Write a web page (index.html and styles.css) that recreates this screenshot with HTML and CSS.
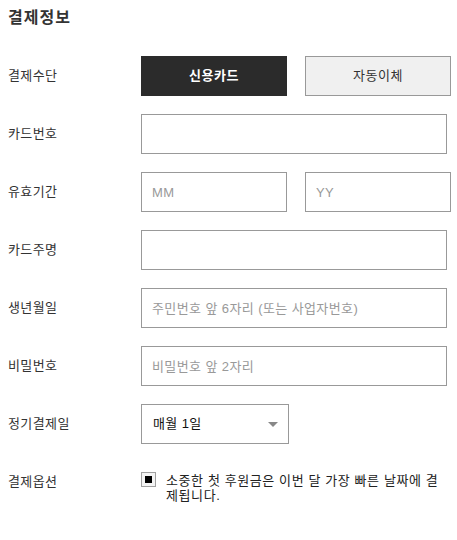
FILE: index.html
```html
<!DOCTYPE html>
<html lang="ko">
<head>
<meta charset="utf-8">
<title>결제정보</title>
<link rel="stylesheet" href="styles.css">
</head>
<body>
<div class="form">
  <h2 class="title">결제정보</h2>
  <div class="row">
    <div class="label">결제수단</div>
    <div class="pair">
      <button class="btn btn-active" type="button">신용카드</button>
      <button class="btn" type="button">자동이체</button>
    </div>
  </div>
  <div class="row">
    <div class="label">카드번호</div>
    <input class="field" type="text">
  </div>
  <div class="row">
    <div class="label">유효기간</div>
    <div class="pair">
      <input class="field field-half" type="text" placeholder="MM">
      <input class="field field-half" type="text" placeholder="YY">
    </div>
  </div>
  <div class="row">
    <div class="label">카드주명</div>
    <input class="field" type="text">
  </div>
  <div class="row">
    <div class="label">생년월일</div>
    <input class="field" type="text" placeholder="주민번호 앞 6자리 (또는 사업자번호)">
  </div>
  <div class="row">
    <div class="label">비밀번호</div>
    <input class="field" type="text" placeholder="비밀번호 앞 2자리">
  </div>
  <div class="row">
    <div class="label">정기결제일</div>
    <div class="select">
      <span class="select-text">매월 1일</span>
      <span class="select-arrow"></span>
    </div>
  </div>
  <div class="row row-option">
    <div class="label">결제옵션</div>
    <div class="option">
      <span class="check"><span class="check-mark"></span></span>
      <span class="option-text">소중한 첫 후원금은 이번 달 가장 빠른 날짜에 결제됩니다.</span>
    </div>
  </div>
</div>
</body>
</html>
```
FILE: styles.css
```css
* {
  box-sizing: border-box;
}

body {
  margin: 0;
  background: #fff;
  font-family: "Liberation Sans", "Noto Sans CJK KR", sans-serif;
  color: #333;
}

.form {
  padding: 8px;
}

.title {
  margin: 0 0 28px;
  font-size: 16px;
  line-height: 20px;
  font-weight: bold;
  letter-spacing: 1px;
  color: #333;
}

.row {
  display: grid;
  grid-template-columns: 133px auto;
  align-items: center;
  height: 40px;
  margin-bottom: 18px;
}

.label {
  font-size: 13px;
  line-height: 18px;
  letter-spacing: 0.4px;
  color: #333;
}

.pair {
  display: grid;
  grid-template-columns: 146px 146px;
  column-gap: 18px;
  height: 40px;
}

.btn {
  margin: 0;
  height: 40px;
  border: 1px solid #999;
  background: #f0f0f0;
  color: #333;
  font-family: inherit;
  font-size: 13px;
  line-height: 18px;
  letter-spacing: 0.5px;
  padding: 0;
}

.btn-active {
  background: #2b2b2b;
  border-color: #2b2b2b;
  color: #fff;
  font-weight: bold;
}

.field {
  margin: 0;
  width: 306px;
  height: 40px;
  border: 1px solid #999;
  padding: 0 10px;
  font-family: inherit;
  font-size: 13px;
  letter-spacing: 0.4px;
  color: #333;
  background: #fff;
  outline: none;
}

.field-half {
  width: 146px;
}

.field::placeholder {
  color: #999;
}

.select {
  width: 148px;
  height: 40px;
  border: 1px solid #999;
  display: flex;
  align-items: center;
  justify-content: space-between;
  padding: 0 10px 0 11px;
}

.select-text {
  font-size: 13px;
  line-height: 18px;
  letter-spacing: 0.4px;
  color: #111;
}

.select-arrow {
  width: 0;
  height: 0;
  border-left: 5px solid transparent;
  border-right: 5px solid transparent;
  border-top: 5px solid #888;
}

.row-option {
  height: auto;
  align-items: start;
  margin-top: 28px;
}

.row-option .label {
  line-height: 15px;
  padding-top: 2px;
}

.option {
  display: flex;
  align-items: flex-start;
  width: 306px;
}

.check {
  flex: none;
  width: 15px;
  height: 15px;
  border: 1px solid #a0a0a0;
  background: #f4f4f4;
  display: flex;
  align-items: center;
  justify-content: center;
  margin-right: 10px;
}

.check-mark {
  width: 7px;
  height: 7px;
  background: #000;
}

.option-text {
  font-size: 13px;
  line-height: 15px;
  letter-spacing: 0.6px;
  color: #222;
  word-break: break-all;
  padding-top: 1px;
  width: 278px;
}
```
